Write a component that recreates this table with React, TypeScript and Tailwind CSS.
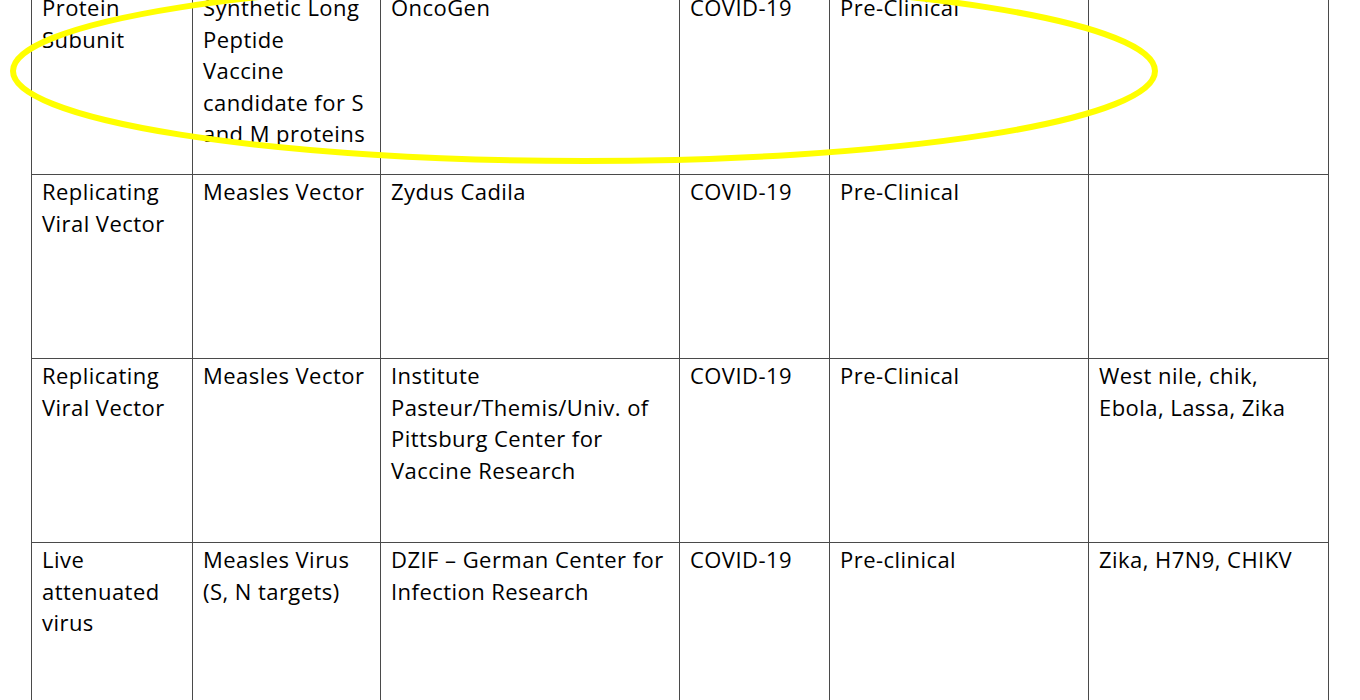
const rows: string[][] = [
  ['Protein Subunit', 'Synthetic Long Peptide Vaccine candidate for S and M proteins', 'OncoGen', 'COVID-19', 'Pre-Clinical', ''],
  ['Replicating Viral Vector', 'Measles Vector', 'Zydus Cadila', 'COVID-19', 'Pre-Clinical', ''],
  [
    'Replicating Viral Vector',
    'Measles Vector',
    'Institute Pasteur/Themis/Univ. of Pittsburg Center for Vaccine Research',
    'COVID-19',
    'Pre-Clinical',
    'West nile, chik, Ebola, Lassa, Zika',
  ],
  ['Live attenuated virus', 'Measles Virus (S, N targets)', 'DZIF – German Center for Infection Research', 'COVID-19', 'Pre-clinical', 'Zika, H7N9, CHIKV'],
];

const widths = ['w-[161px]', 'w-[188px]', 'w-[299px]', 'w-[150px]', 'w-[259px]', 'w-[240px]'];

export default function App() {
  return (
    <div className="relative h-[700px] w-[1360px] overflow-hidden bg-white">
      <div className="pl-[31px] mt-[-10px]">
        <table className="table-fixed border-collapse text-[22px] leading-[31.5px] tracking-[0.45px] text-black [font-family:'Open_Sans',sans-serif]">
          <colgroup>
            {widths.map((w, i) => (
              <col key={i} className={w} />
            ))}
          </colgroup>
          <tbody>
            {rows.map((r, i) => (
              <tr key={i} className="h-[184px]">
                {r.map((c, j) => (
                  <td key={j} className="border border-[#4a4a4a] pl-[10px] pr-[11px] pt-[1px] align-top">
                    {c}
                  </td>
                ))}
              </tr>
            ))}
          </tbody>
        </table>
      </div>
      <svg className="pointer-events-none absolute left-0 top-0" width="1360" height="700">
        <ellipse cx="584" cy="71" rx="571" ry="90" fill="none" stroke="#ffff00" strokeWidth="6" />
      </svg>
    </div>
  );
}
